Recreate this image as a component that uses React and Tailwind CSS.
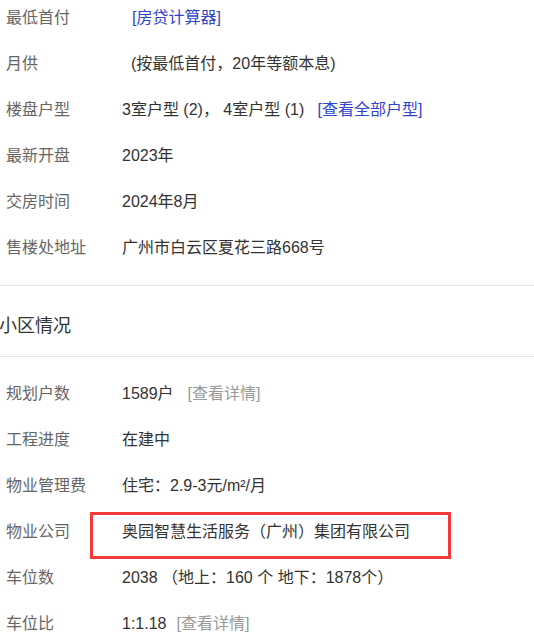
const font = { fontFamily: '"Liberation Sans", "Noto Sans CJK SC", sans-serif' };

function Row({ label, children, boxed }) {
  return (
    <div className="relative flex h-[46px] items-center text-[16px]">
      <div className="w-[122px] shrink-0 pl-[6px] text-[#666]">{label}</div>
      <div className="text-[#333] whitespace-nowrap">{children}</div>
      {boxed && (
        <div className="absolute left-[90px] top-[3px] h-[47px] w-[361px] border-[3px] border-[#f23a3a]" />
      )}
    </div>
  );
}

const Blue = ({ children }) => <span className="text-[#2f44d0]">{children}</span>;
const Gray = ({ children }) => <span className="text-[#999]">{children}</span>;

export default function App() {
  return (
    <div className="h-[643px] w-[534px] overflow-hidden bg-white" style={font}>
      <div className="-mt-[5px]">
        <Row label="最低首付">
          <span className="pl-[10px]">
            <Blue>[房贷计算器]</Blue>
          </span>
        </Row>
        <Row label="月供">
          <span className="pl-[9px]">(按最低首付，20年等额本息)</span>
        </Row>
        <Row label="楼盘户型">
          3室户型 (2)，&nbsp;4室户型 (1)&nbsp;&nbsp; <Blue>[查看全部户型]</Blue>
        </Row>
        <Row label="最新开盘">2023年</Row>
        <Row label="交房时间">2024年8月</Row>
        <Row label="售楼处地址">广州市白云区夏花三路668号</Row>
      </div>

      <div className="mt-[14px] border-t border-[#e5e5e5]" />
      <div className="flex h-[70px] items-center pt-[11px] text-[18px] text-[#333]">
        <span className="-ml-[1px]">小区情况</span>
      </div>
      <div className="border-t border-[#e5e5e5]" />

      <div className="mt-[14px]">
        <Row label="规划户数">
          1589户<span className="pl-[14px]"><Gray>[查看详情]</Gray></span>
        </Row>
        <Row label="工程进度">在建中</Row>
        <Row label="物业管理费">住宅：2.9-3元/m²/月</Row>
        <Row label="物业公司" boxed>
          奥园智慧生活服务（广州）集团有限公司
        </Row>
        <Row label="车位数">2038 （地上：160 个 地下：1878个）</Row>
        <Row label="车位比">
          1:1.18<span className="pl-[10px]"><Gray>[查看详情]</Gray></span>
        </Row>
      </div>
    </div>
  );
}
